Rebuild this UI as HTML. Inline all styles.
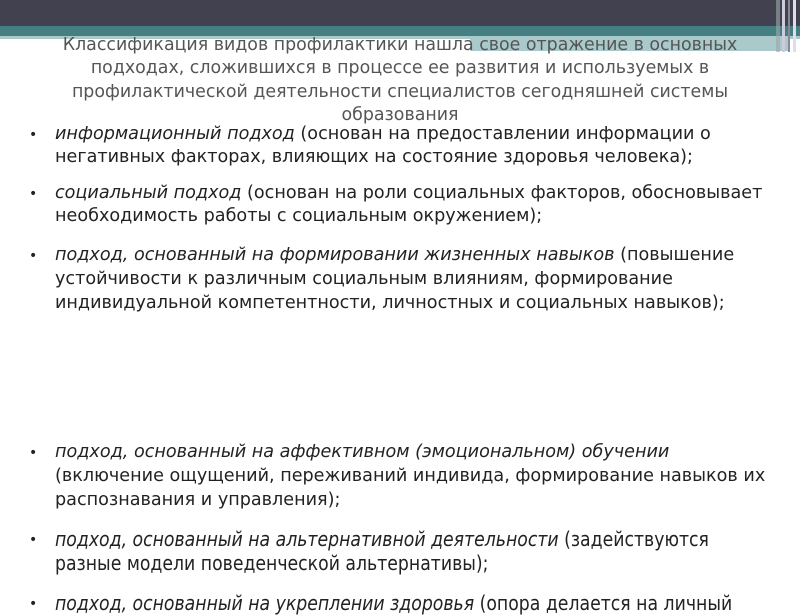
<!DOCTYPE html>
<html><head><meta charset="utf-8">
<style>
html,body{margin:0;padding:0}
body{width:800px;height:600px;position:relative;overflow:hidden;background:#fff;font-family:"DejaVu Sans","Liberation Sans",sans-serif}
.bar{position:absolute;left:0;top:0;width:800px;height:26px;background:#41414f}
.teal{position:absolute;left:0;top:26px;width:800px;height:10px;background:#467f82}
.lt{position:absolute;left:0;top:36px;width:800px;height:3px;background:#a9c8c9}
.lt2{position:absolute;left:470px;top:37px;width:318px;height:14px;background:#a9c9ca}
.v{position:absolute;top:0;height:52px}
.t{position:absolute;left:0;width:800px;text-align:center;color:#555;font-size:17.4px;white-space:nowrap}
.l{position:absolute;left:55px;color:#222;font-size:17.6px;white-space:nowrap}
.n{transform:scaleX(0.86);transform-origin:left}
.b{position:absolute;left:29px;font-size:14px;color:#222}
i{font-style:italic}
</style></head><body>
<div class="bar"></div><div class="teal"></div><div class="lt"></div><div class="lt2"></div>
<div class="v" style="left:776px;width:4px;background:#9aa;opacity:.6"></div>
<div class="v" style="left:782px;width:3px;background:#ccd"></div>
<div class="v" style="left:788px;width:2px;background:#889"></div>
<div class="v" style="left:793px;width:3px;background:#dde"></div>

<div class="t" style="top:35px">Классификация видов профилактики нашла свое отражение в основных</div>
<div class="t" style="top:58px">подходах, сложившихся в процессе ее развития и используемых в</div>
<div class="t" style="top:82px">профилактической деятельности специалистов сегодняшней системы</div>
<div class="t" style="top:105px">образования</div>

<div class="b" style="top:127px">•</div>
<div class="l" style="top:124px"><i>информационный подход</i> (основан на предоставлении информации о</div>
<div class="l" style="top:147px">негативных факторах, влияющих на состояние здоровья человека);</div>

<div class="b" style="top:186px">•</div>
<div class="l" style="top:183px"><i>социальный подход</i> (основан на роли социальных факторов, обосновывает</div>
<div class="l" style="top:206px">необходимость работы с социальным окружением);</div>

<div class="b" style="top:248px">•</div>
<div class="l" style="top:245px"><i>подход, основанный на формировании жизненных навыков</i> (повышение</div>
<div class="l" style="top:269px">устойчивости к различным социальным влияниям, формирование</div>
<div class="l" style="top:293px">индивидуальной компетентности, личностных и социальных навыков);</div>

<div class="b" style="top:445px">•</div>
<div class="l" style="top:442px"><i>подход, основанный на аффективном (эмоциональном) обучении</i></div>
<div class="l" style="top:466px">(включение ощущений, переживаний индивида, формирование навыков их</div>
<div class="l" style="top:490px">распознавания и управления);</div>

<div class="b" style="top:532px">•</div>
<div class="l n" style="top:527px;font-size:20.1px"><i>подход, основанный на альтернативной деятельности</i> (задействуются</div>
<div class="l n" style="top:551px;font-size:20.1px">разные модели поведенческой альтернативы);</div>

<div class="b" style="top:596px">•</div>
<div class="l n" style="top:591px;font-size:20.1px"><i>подход, основанный на укреплении здоровья</i> (опора делается на личный</div>
</body></html>
